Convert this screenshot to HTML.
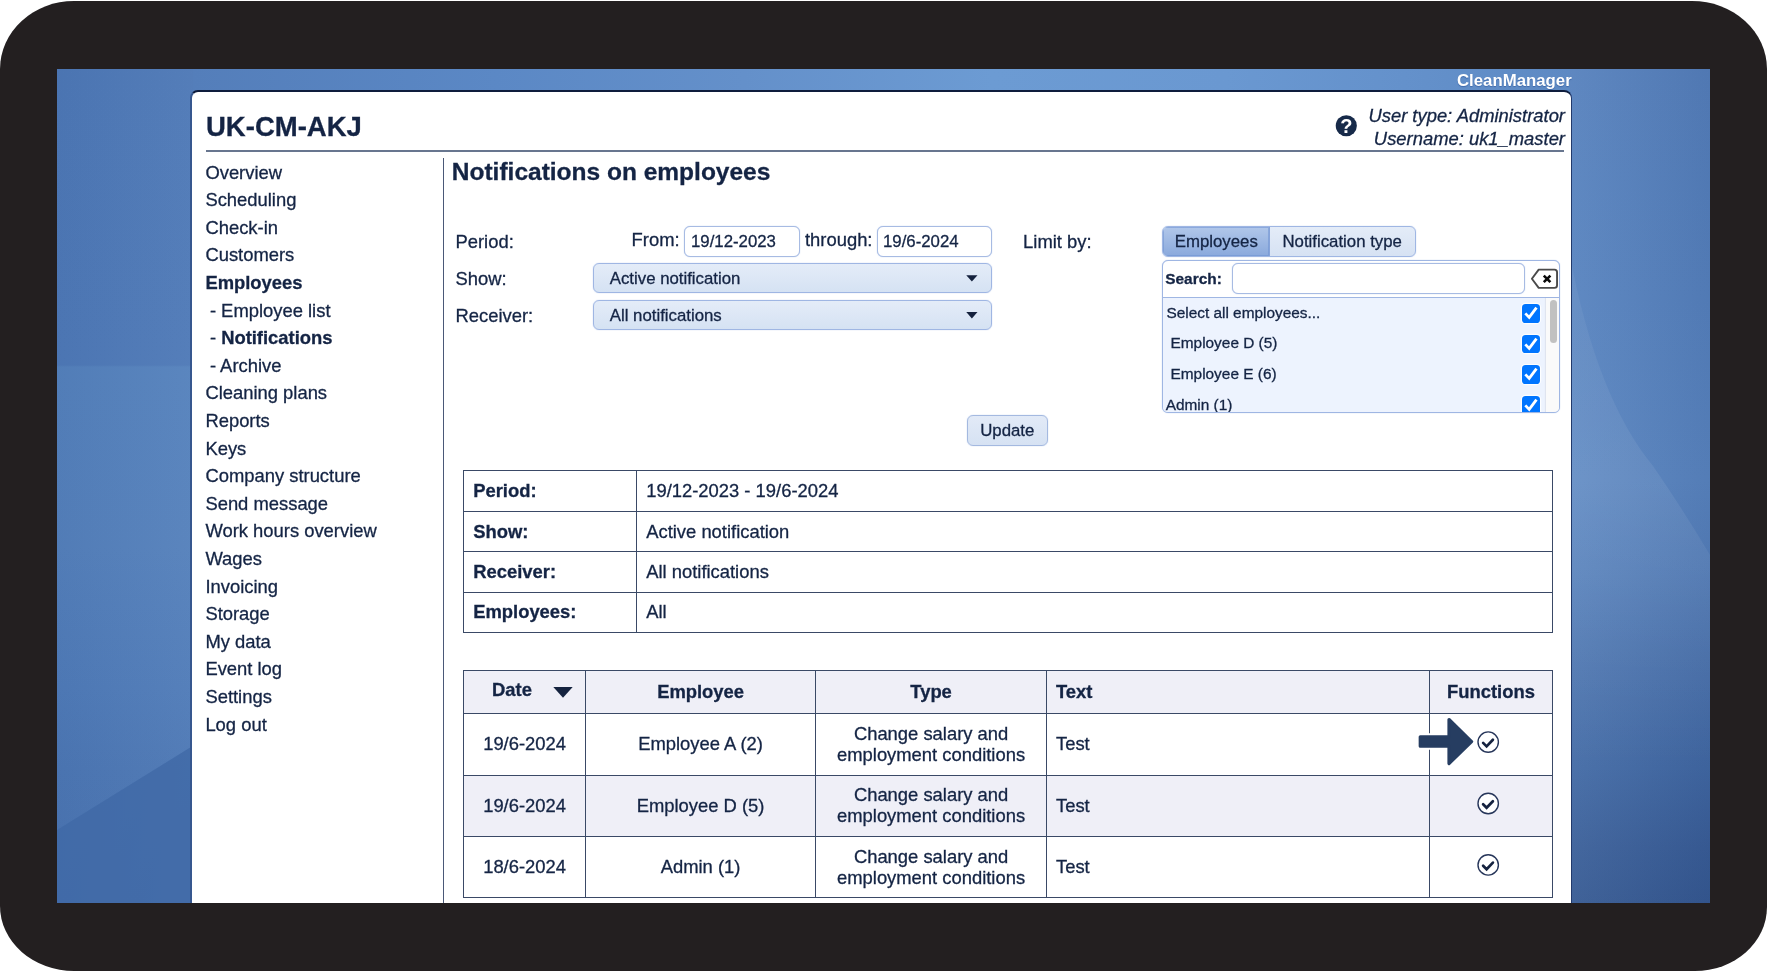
<!DOCTYPE html>
<html lang="en">
<head>
<meta charset="utf-8">
<title>CleanManager - Notifications on employees</title>
<style>
*{box-sizing:border-box;margin:0;padding:0}
html,body{width:1767px;height:971px;overflow:hidden;background:#fff}
body{font-family:"Liberation Sans",sans-serif;color:#142444;font-size:18.4px;position:relative}
.abs{position:absolute}
#frame{position:absolute;left:0;top:1px;width:1767px;height:970px;background:#231f20;border-radius:74px 75px 72px 74px / 68px 68px 64px 65px}
#screen{position:absolute;left:57px;top:69px;width:1653px;height:834px;overflow:hidden;background:#5580bc}
#bgT{position:absolute;left:136px;top:0;width:1377px;height:25px;background:linear-gradient(90deg,#547eba 0%,#5b88c5 22%,#6490ca 40%,#6c9bd3 58%,#6a98d1 75%,#6491cb 88%,#5d89c3 100%)}
#bgL{position:absolute;left:0;top:-1px;width:136px;height:835px;background:linear-gradient(90deg,rgba(0,0,40,.03),rgba(255,255,255,.04)),linear-gradient(180deg,#4d78b6 0px,#4e79b7 297px,#5481bc 299px,#5480bb 480px,#4f7bb8 620px,#4c77b4 700px,#4a74b1 835px)}
#bgR{position:absolute;left:1513px;top:-1px;width:140px;height:835px;background:linear-gradient(90deg,rgba(255,255,255,.05),rgba(0,0,40,.07)),linear-gradient(180deg,#5681bd 0px,#5783bf 232px,#5a86c1 412px,#5580bb 500px,#4b74af 600px,#426aa5 700px,#3a5f99 780px,#365a93 835px)}
#brand{position:absolute;right:138.5px;top:4.2px;color:#fff;font-weight:bold;font-size:16.8px;line-height:1;white-space:nowrap;text-shadow:0 1px 1px rgba(40,80,150,.6);will-change:transform}
#panel{position:absolute;left:133px;top:21px;width:1382px;height:830px;background:#fff;border-right:1px solid #223a6c;border-left:2px solid #36578f;border-top:2px solid #0e1c3c;border-bottom:none;border-radius:8px 8px 0 0}
.t{position:absolute;white-space:nowrap;line-height:1}

#c{position:absolute;left:0;top:0;width:1767px;height:903px;overflow:hidden;will-change:transform;-webkit-text-stroke:.3px #142444}
#title{left:206px;top:112.7px;font-size:27.5px;font-weight:bold}
#hr{position:absolute;left:206px;top:150px;width:1358.4px;height:2px;background:#68768f}
#vr{position:absolute;left:443px;top:158px;width:1.4px;height:750px;background:#4a5877}
#nav{position:absolute;left:205.4px;top:158.7px;font-size:18.4px;line-height:27.6px;white-space:nowrap}
#nav b{font-weight:bold}
#nav .s{padding-left:4.5px}
#h1{left:451.8px;top:159.7px;font-size:24.5px;font-weight:bold}
.u{font-style:italic;font-size:18.4px;right:202px}
.lbl{font-size:18.4px}
.inp{box-shadow:0 0 1px rgba(120,155,220,.7);position:absolute;height:30.6px;top:226px;background:#fff;border:1.2px solid #a7bbe3;border-radius:6px;font-size:16.8px;line-height:30.4px;padding-left:6px;white-space:nowrap}
.sel{box-shadow:0 0 1px rgba(120,155,220,.75);position:absolute;left:593.2px;width:398.8px;height:30.6px;border:1.2px solid #9fb6e3;border-radius:6px;background:linear-gradient(#e4ecf8,#d5e2f3);font-size:16.8px;line-height:30.4px;padding-left:15.6px;white-space:nowrap}

#tabs{box-shadow:0 0 1px rgba(120,155,220,.7);position:absolute;left:1161.5px;top:226px;width:254.2px;height:30.7px;border:1.2px solid #9fb6e3;border-radius:6px;overflow:hidden;font-size:16.8px;line-height:29.6px;white-space:nowrap;background:linear-gradient(#e4ecf8,#d6e2f3)}
#tabs .a{position:absolute;left:0;top:0;width:107.5px;height:100%;background:linear-gradient(#b1c7ea,#8aa9dc);box-shadow:inset 0 0 0 1px rgba(110,145,210,.55);border-right:1.2px solid #86a3d9;padding-left:12.3px}
#tabs .b{position:absolute;left:120px;top:0}
#sbox{box-shadow:0 0 1px rgba(120,155,220,.7);position:absolute;left:1161.5px;top:260.3px;width:398.4px;height:152.4px;border:1.2px solid #9fb6e3;border-radius:6px;overflow:hidden;background:#fff}
#sbox .list{position:absolute;left:0;top:36px;right:0;bottom:0;background:#edf3fe;border-top:1.2px solid #9fb6e3;font-size:15.4px}
#sbox .trk{position:absolute;right:0;top:0;width:13px;bottom:0;background:#fafafa;box-shadow:-1px 0 1px rgba(0,0,0,.06)}
.srch{box-shadow:0 0 1px rgba(120,155,220,.7);position:absolute;left:1232.2px;top:263.4px;width:292.5px;height:31px;border:1.2px solid #a7bbe3;border-radius:6px;background:#fff}
.cb{position:absolute;left:1522px;width:18.4px;height:18.6px;border-radius:3.6px;background:#0075ff;box-shadow:0 0 0 1.2px rgba(255,255,255,.85)}
.cb svg{position:absolute;left:0;top:0}
.li{font-size:15.4px}
#upd{box-shadow:0 0 1px rgba(120,155,220,.7);position:absolute;left:967px;top:415.3px;width:80.6px;height:30.4px;border:1.2px solid #a4b9e0;border-radius:6px;background:linear-gradient(#e2eaf7,#d6e2f3);font-size:16.8px;line-height:30.2px;text-align:center}
table{border-collapse:collapse;position:absolute;font-size:18.4px}
td,th{border:1.3px solid #3a4966;vertical-align:middle}
#t1{left:463.2px;top:470.4px;width:1089.8px}
#t1 td{height:40.45px;padding:0 0 0 9px}
#t1 td:first-child{width:173px;font-weight:bold}
#t2{left:463.2px;top:669.6px;width:1089.8px;text-align:center;line-height:21px}
#t2 th{height:43.6px;background:#efeff7;font-weight:bold;padding-bottom:1.4px}
#t2 td{height:61.4px;padding-bottom:1.3px}
#t2 tr.alt td{background:#efeff7}
#t2 .l{text-align:left;padding-left:9px}
</style>
</head>
<body>
<div id="frame"></div>
<div id="screen">
  <div id="bgL"></div><div id="bgR"></div><div id="bgT"></div>
  <svg class="abs" style="left:0;top:-1px" width="1653" height="835" viewBox="0 0 1653 835"><path d="M0 762 L134 679 V835 H0 Z" fill="#4069a6" fill-opacity=".8"/><defs><linearGradient id="gR" x1="0" y1="188" x2="0" y2="700" gradientUnits="userSpaceOnUse"><stop offset="0" stop-color="#fff" stop-opacity=".045"/><stop offset=".45" stop-color="#fff" stop-opacity=".07"/><stop offset="1" stop-color="#fff" stop-opacity="0"/></linearGradient></defs><path d="M1513 188 Q1540 330 1596 398 Q1625 440 1653 487 V700 H1513 Z" fill="url(#gR)"/></svg>
  <div id="brand">CleanManager</div>
  <div id="panel"></div>
</div>
<div id="c">
<div class="t" id="title">UK-CM-AKJ</div>
<div class="t u" style="top:106.6px">User type: Administrator</div>
<div class="t u" style="top:129.6px">Username: uk1_master</div>
<svg class="abs" style="left:1335px;top:114px" width="24" height="24" viewBox="0 0 24 24"><circle cx="11.3" cy="11.8" r="10.55" fill="#172a49"/><text x="11.4" y="19.1" text-anchor="middle" font-family="Liberation Sans, sans-serif" font-weight="bold" font-size="20" fill="#fff">?</text></svg>
<div id="hr"></div>
<div id="vr"></div>
<div id="nav">
<div>Overview</div><div>Scheduling</div><div>Check-in</div><div>Customers</div><div><b>Employees</b></div>
<div class="s">- Employee list</div><div class="s">- <b>Notifications</b></div><div class="s">- Archive</div>
<div>Cleaning plans</div><div>Reports</div><div>Keys</div><div>Company structure</div><div>Send message</div><div>Work hours overview</div><div>Wages</div><div>Invoicing</div><div>Storage</div><div>My data</div><div>Event log</div><div>Settings</div><div>Log out</div>
</div>
<div class="t" id="h1">Notifications on employees</div>

<div class="t lbl" style="left:455.5px;top:232.8px">Period:</div>
<div class="t lbl" style="left:455.5px;top:270.1px">Show:</div>
<div class="t lbl" style="left:455.5px;top:306.7px">Receiver:</div>
<div class="t lbl" style="left:631.6px;top:231px">From:</div>
<div class="t lbl" style="left:805px;top:231px">through:</div>
<div class="t lbl" style="left:1023.1px;top:232.8px">Limit by:</div>
<div class="inp" style="left:684px;width:116px">19/12-2023</div>
<div class="inp" style="left:876.8px;width:115.4px;padding-left:5.2px">19/6-2024</div>
<div class="sel" style="top:262.8px">Active notification</div>
<div class="sel" style="top:299.6px">All notifications</div>

<svg class="abs" style="left:964px;top:273px" width="16" height="11" viewBox="0 0 16 11"><path d="M2.25 2.2 H13.5 L7.88 8.6 Z" fill="#14213d"/></svg>
<svg class="abs" style="left:964px;top:310px" width="16" height="11" viewBox="0 0 16 11"><path d="M2.25 2.0 H13.5 L7.88 8.4 Z" fill="#14213d"/></svg>
<div id="tabs"><div class="a">Employees</div><div class="b">Notification type</div></div>
<div id="sbox"><div class="list"><div class="trk"></div></div></div>
<div class="t" style="left:1165.3px;top:270.6px;font-size:15.4px;font-weight:bold">Search:</div>
<div class="srch"></div>
<svg class="abs" style="left:1528px;top:266px" width="32" height="26" viewBox="0 0 32 26"><path d="M10.7 3.65 H26.5 Q29.05 3.65 29.05 6.2 V19.3 Q29.05 21.85 26.5 21.85 H10.7 L3.9 12.75 Z" fill="#fff" stroke="#4a4a4a" stroke-width="1.9" stroke-linejoin="round"/><path d="M15.8 9.6 L22.4 16.2 M22.4 9.6 L15.8 16.2" stroke="#0a0a0a" stroke-width="2.6" fill="none"/></svg>
<div class="t li" style="left:1166.4px;top:304.7px">Select all employees...</div>
<div class="t li" style="left:1170.5px;top:335.1px">Employee D (5)</div>
<div class="t li" style="left:1170.5px;top:365.8px">Employee E (6)</div>
<div id="clip" style="position:absolute;left:1162px;top:380px;width:398px;height:32px;overflow:hidden"><div class="t li" style="left:3.7px;top:17.3px">Admin (1)</div><div class="cb" style="left:359.8px;top:16.3px"><svg width="18.6" height="18.6" viewBox="0 0 18.6 18.6"><path d="M3.3 9.4 L7.2 13.4 L14.5 3.7" fill="none" stroke="#fff" stroke-width="2.8" stroke-linecap="butt" stroke-linejoin="miter"/></svg></div></div>
<div class="cb" style="top:304px"><svg width="18.6" height="18.6" viewBox="0 0 18.6 18.6"><path d="M3.3 9.4 L7.2 13.4 L14.5 3.7" fill="none" stroke="#fff" stroke-width="2.8" stroke-linecap="butt" stroke-linejoin="miter"/></svg></div>
<div class="cb" style="top:334.6px"><svg width="18.6" height="18.6" viewBox="0 0 18.6 18.6"><path d="M3.3 9.4 L7.2 13.4 L14.5 3.7" fill="none" stroke="#fff" stroke-width="2.8" stroke-linecap="butt" stroke-linejoin="miter"/></svg></div>
<div class="cb" style="top:365.3px"><svg width="18.6" height="18.6" viewBox="0 0 18.6 18.6"><path d="M3.3 9.4 L7.2 13.4 L14.5 3.7" fill="none" stroke="#fff" stroke-width="2.8" stroke-linecap="butt" stroke-linejoin="miter"/></svg></div>
<div class="thumb abs" style="left:1550.2px;top:300px;width:6.8px;height:42.5px;border-radius:4px;background:#c1c1c1"></div>
<div id="upd">Update</div>
<table id="t1">
<tr><td>Period:</td><td>19/12-2023 - 19/6-2024</td></tr>
<tr><td>Show:</td><td>Active notification</td></tr>
<tr><td>Receiver:</td><td>All notifications</td></tr>
<tr><td>Employees:</td><td>All</td></tr>
</table>
<table id="t2">
<tr><th style="width:121.8px"><span style="position:relative;left:-12.6px;top:-1.5px">Date</span></th><th style="width:230.2px">Employee</th><th style="width:230.8px">Type</th><th class="l">Text</th><th style="width:123px">Functions</th></tr>
<tr><td>19/6-2024</td><td>Employee A (2)</td><td>Change salary and<br>employment conditions</td><td class="l">Test</td><td></td></tr>
<tr class="alt"><td>19/6-2024</td><td>Employee D (5)</td><td>Change salary and<br>employment conditions</td><td class="l">Test</td><td></td></tr>
<tr><td>18/6-2024</td><td>Admin (1)</td><td>Change salary and<br>employment conditions</td><td class="l">Test</td><td></td></tr>
</table>
<svg class="abs" style="left:553px;top:686.8px" width="20" height="11" viewBox="0 0 20 11"><path d="M0.3 0 H19.7 L10 10.8 Z" fill="#15233f"/></svg>
<svg class="abs" style="left:1476px;top:730px" width="25" height="25" viewBox="0 0 25 25"><g transform="translate(0.70 0.60)"><circle cx="11.5" cy="11.5" r="10.2" fill="#fff" stroke="#27365a" stroke-width="1.4"/><path d="M6.4 12.3 L9.9 15.8 L16.2 9.2" fill="none" stroke="#15223f" stroke-width="2.7" stroke-linecap="round" stroke-linejoin="miter"/></g></svg> <svg class="abs" style="left:1476px;top:791px" width="25" height="25" viewBox="0 0 25 25"><g transform="translate(0.70 1.00)"><circle cx="11.5" cy="11.5" r="10.2" fill="#fff" stroke="#27365a" stroke-width="1.4"/><path d="M6.4 12.3 L9.9 15.8 L16.2 9.2" fill="none" stroke="#15223f" stroke-width="2.7" stroke-linecap="round" stroke-linejoin="miter"/></g></svg> <svg class="abs" style="left:1476px;top:853px" width="25" height="25" viewBox="0 0 25 25"><g transform="translate(0.70 0.40)"><circle cx="11.5" cy="11.5" r="10.2" fill="#fff" stroke="#27365a" stroke-width="1.4"/><path d="M6.4 12.3 L9.9 15.8 L16.2 9.2" fill="none" stroke="#15223f" stroke-width="2.7" stroke-linecap="round" stroke-linejoin="miter"/></g></svg>
<svg class="abs" style="left:1414px;top:713px" width="64" height="57" viewBox="0 0 64 57"><path d="M6.25 23.8 H35 V6.5 L57.6 28.525 L35 50.55 V33.25 H6.25 Z" fill="#fff" stroke="#fff" stroke-width="7" stroke-linejoin="round"/><path d="M6.25 23.8 H35 V6.5 L57.6 28.525 L35 50.55 V33.25 H6.25 Z" fill="#263d61" stroke="#263d61" stroke-width="3.2" stroke-linejoin="round"/></svg>
</div>
</body>
</html>
